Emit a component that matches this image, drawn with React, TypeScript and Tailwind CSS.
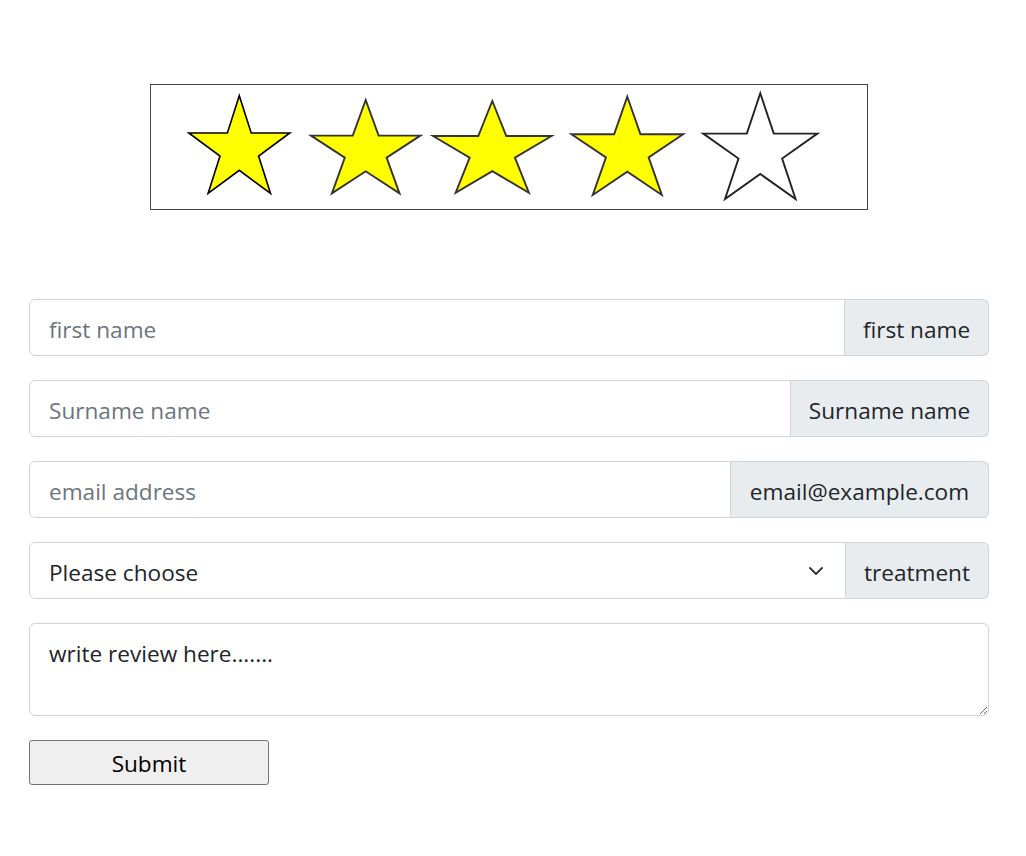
import React from "react";

type StarSpec = { cx: number; tip: number; rx: number; ry: number; fill: string; stroke: string };

function starPoints(s: StarSpec) {
  const cy = s.tip + s.ry;
  const pts: string[] = [];
  for (let i = 0; i < 10; i++) {
    const ang = (-90 + i * 36) * (Math.PI / 180);
    const f = i % 2 === 0 ? 1 : 0.382;
    pts.push(`${(s.cx + Math.cos(ang) * s.rx * f).toFixed(2)},${(cy + Math.sin(ang) * s.ry * f).toFixed(2)}`);
  }
  return pts.join(" ");
}

// coordinates relative to the rating box (left 150, top 84)
const stars: StarSpec[] = [
  { cx: 239.3 - 150, tip: 95.7 - 84, rx: 53.1, ry: 54, fill: "#ffff00", stroke: "#000" },
  { cx: 365.7 - 150, tip: 100 - 84, rx: 57.5, ry: 51.6, fill: "#ffff00", stroke: "#333" },
  { cx: 492.3 - 150, tip: 101 - 84, rx: 62.3, ry: 50.7, fill: "#ffff00", stroke: "#333" },
  { cx: 627.3 - 150, tip: 96.7 - 84, rx: 58.7, ry: 54.3, fill: "#ffff00", stroke: "#333" },
  { cx: 760.3 - 150, tip: 93.3 - 84, rx: 60, ry: 58.4, fill: "#ffffff", stroke: "#222" },
];

const font = { fontFamily: '"Open Sans", "Noto Sans", sans-serif' };

function Row({ placeholder, addon, addonW }: { placeholder: string; addon: string; addonW: string }) {
  return (
    <div className="flex h-[57px] w-full">
      <input
        placeholder={placeholder}
        className="min-w-0 flex-1 rounded-l-[6px] border border-[#ced4da] bg-white px-[19px] pt-[4px] text-[22.6px] text-[#212529] outline-none placeholder:text-[#6c757d]"
      />
      <div
        className={`flex items-center justify-center rounded-r-[6px] border border-l-0 border-[#ced4da] bg-[#e9ecef] pt-[4px] text-[22.6px] text-[#212529] ${addonW}`}
      >
        {addon}
      </div>
    </div>
  );
}

export default function App() {
  return (
    <div className="min-h-[856px] bg-white" style={font}>
      <div className="ml-[29px] w-[960px] pt-[84px]">
        <div className="mx-auto h-[126px] w-[718px] border border-[#444]">
          <svg width="716" height="124" viewBox="0 0 716 124" className="block">
            {stars.map((s, i) => (
              <polygon
                key={i}
                points={starPoints({ ...s, cx: s.cx - 1, tip: s.tip - 1 })}
                fill={s.fill}
                stroke={s.stroke}
                strokeWidth={i === 0 ? 1.6 : 1.9}
                strokeLinejoin="miter"
              />
            ))}
          </svg>
        </div>

        <form className="mt-[89px] flex flex-col gap-[24px]" onSubmit={(e) => e.preventDefault()}>
          <Row placeholder="first name" addon="first name" addonW="w-[144px]" />
          <Row placeholder="Surname name" addon="Surname name" addonW="w-[198px]" />
          <Row placeholder="email address" addon="email@example.com" addonW="w-[258px]" />
          <div className="flex h-[57px] w-full">
            <div className="relative flex min-w-0 flex-1">
              <select
                defaultValue=""
                className="w-full appearance-none rounded-l-[6px] border border-[#ced4da] bg-white px-[19px] pt-[4px] text-[22.6px] text-[#212529] outline-none"
              >
                <option value="">Please choose</option>
                <option value="a">Treatment A</option>
              </select>
              <svg
                className="pointer-events-none absolute right-[22px] top-[21px]"
                width="16"
                height="16"
                viewBox="0 0 16 16"
              >
                <path d="M2 5l6 6 6-6" fill="none" stroke="#343a40" strokeWidth="2" strokeLinecap="round" strokeLinejoin="round" />
              </svg>
            </div>
            <div className="flex w-[143px] items-center justify-center rounded-r-[6px] border border-l-0 border-[#ced4da] bg-[#e9ecef] pt-[4px] text-[22.6px] text-[#212529]">
              treatment
            </div>
          </div>
          <textarea
            defaultValue="write review here......."
            className="block h-[93px] w-full rounded-[6px] border border-[#ced4da] bg-white px-[19px] pt-[12px] pb-[8px] text-[22.6px] leading-[36px] text-[#212529] outline-none"
          />
          <div>
            <button
              type="submit"
              className="h-[45px] w-[240px] rounded-[3px] border border-[#767676] bg-[#efefef] pt-[3px] text-[22.6px] text-black"
            >
              Submit
            </button>
          </div>
        </form>
      </div>
    </div>
  );
}
